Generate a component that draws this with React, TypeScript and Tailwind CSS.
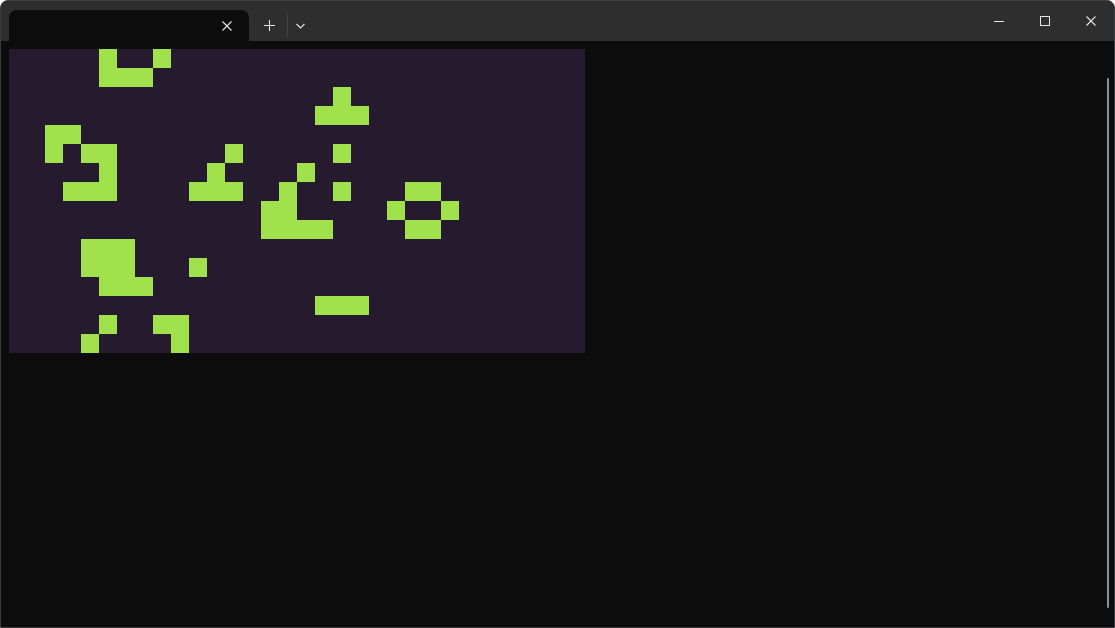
import React from "react";

const ROWS: number[][] = [
  [5, 8],
  [5, 6, 7],
  [18],
  [17, 18, 19],
  [2, 3],
  [2, 4, 5, 12, 18],
  [5, 11, 16],
  [3, 4, 5, 10, 11, 12, 15, 18, 22, 23],
  [14, 15, 21, 24],
  [14, 15, 16, 17, 22, 23],
  [4, 5, 6],
  [4, 5, 6, 10],
  [5, 6, 7],
  [17, 18, 19],
  [5, 8, 9],
  [4, 9],
];

const Board: React.FC = () => {
  const cells = [];
  for (let r = 0; r < 16; r++) {
    for (let c = 0; c < 32; c++) {
      const alive = ROWS[r].includes(c);
      cells.push(
        <div key={`${r}-${c}`} className={alive ? "bg-[#a1e14c]" : ""} />
      );
    }
  }
  return (
    <div className="grid grid-cols-[repeat(32,18px)] grid-rows-[repeat(16,19px)] bg-[#261b2e]">
      {cells}
    </div>
  );
};

const XIcon = ({ size = 10 }: { size?: number }) => (
  <svg width={size} height={size} viewBox="0 0 10 10" fill="none" stroke="#e6e6e6" strokeWidth="1.1">
    <path d="M0.5 0.5L9.5 9.5M9.5 0.5L0.5 9.5" />
  </svg>
);

export default function App() {
  return (
    <div className="flex h-[628px] w-[1115px] flex-col overflow-hidden rounded-t-lg border border-[#3a3d40] bg-[#0c0c0c]">
      {/* title bar */}
      <div className="flex h-[40px] shrink-0 items-end bg-[#2e2e2e] pl-[8px]">
        <div className="flex h-[31px] w-[240px] items-center justify-end rounded-t-lg bg-[#0c0c0c] pr-[17px]">
          <XIcon />
        </div>
        <div className="flex h-[31px] items-center">
          <div className="flex w-[38px] justify-center pl-[2px]">
            <svg width="11" height="11" viewBox="0 0 11 11" fill="none" stroke="#e6e6e6" strokeWidth="1.1">
              <path d="M5.5 0V11M0 5.5H11" />
            </svg>
          </div>
          <div className="h-[23px] w-px bg-[#444]" />
          <div className="flex w-[24px] justify-center">
            <svg width="9" height="6" viewBox="0 0 9 6" fill="none" stroke="#e6e6e6" strokeWidth="1.1">
              <path d="M0.5 1L4.5 5L8.5 1" />
            </svg>
          </div>
        </div>
        <div className="flex-1" />
        <div className="flex h-[40px] items-center self-start">
          <div className="flex w-[46px] justify-center">
            <svg width="10" height="10" viewBox="0 0 10 10" fill="none" stroke="#e6e6e6" strokeWidth="1">
              <path d="M0 5.5H10" />
            </svg>
          </div>
          <div className="flex w-[46px] justify-center">
            <svg width="10" height="10" viewBox="0 0 10 10" fill="none" stroke="#e6e6e6" strokeWidth="1">
              <rect x="0.5" y="0.5" width="9" height="9" />
            </svg>
          </div>
          <div className="flex w-[46px] justify-center">
            <XIcon />
          </div>
        </div>
      </div>

      {/* terminal body */}
      <div className="flex flex-1 pl-[8px] pt-[8px]">
        <div>
          <Board />
        </div>
        <div className="flex-1" />
        <div className="mr-[5px] mt-[29px] mb-[19px] w-[2px] rounded-sm bg-[#8f8f8f]" />
      </div>
    </div>
  );
}
